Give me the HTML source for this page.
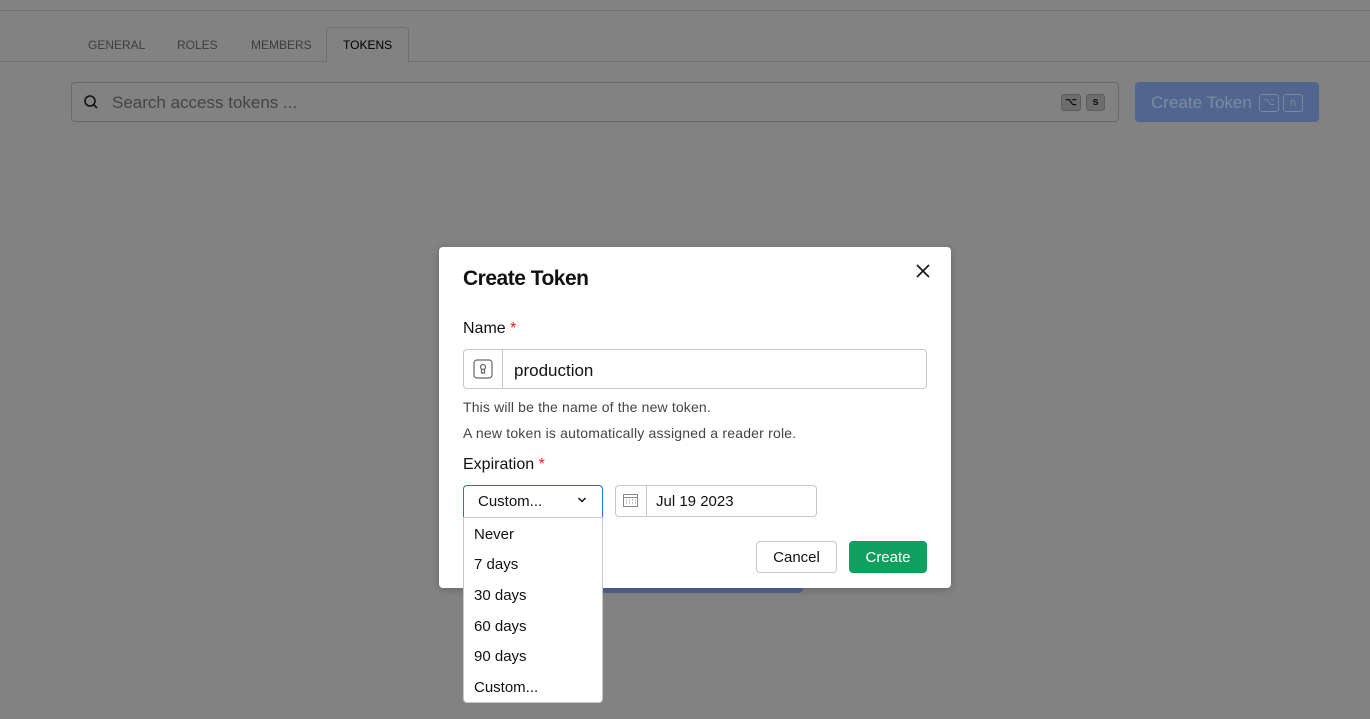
<!DOCTYPE html>
<html><head><style>
*{box-sizing:border-box;margin:0;padding:0}
body{width:1370px;height:719px;background:#828282;font-family:"Liberation Sans",sans-serif;position:relative;overflow:hidden;color:#111}
.abs{position:absolute}
.tab{position:absolute;top:38px;font-size:12px;color:#3d3d3d}
</style></head><body>
<div class="abs" style="left:0;top:10px;width:1370px;height:1px;background:#6f6f6f"></div>
<div class="abs" style="left:0;top:61px;width:1370px;height:1px;background:#6f6f6f"></div>
<div class="tab" style="left:88px">GENERAL</div>
<div class="tab" style="left:177px">ROLES</div>
<div class="tab" style="left:251px">MEMBERS</div>
<div class="abs" style="left:326px;top:27px;width:83px;height:35px;border:1px solid #6f6f6f;border-bottom:none;border-radius:4px 4px 0 0;background:#828282"></div>
<div class="tab" style="left:343px;color:#000">TOKENS</div>
<div class="abs" style="left:71px;top:82px;width:1048px;height:40px;border:1px solid #6a6a6a;border-radius:4px"></div>
<svg class="abs" style="left:83px;top:94px" width="16" height="16" viewBox="0 0 16 16"><circle cx="7" cy="7" r="5" fill="none" stroke="#111" stroke-width="1.6"/><path d="M11 11l3 3" stroke="#111" stroke-width="1.6"/></svg>
<div class="abs" style="left:112px;top:93px;font-size:17px;color:#444">Search access tokens ...</div>
<div class="abs" style="left:1061px;top:94px;width:20px;height:17px;background:#6d6d6d;border:1px solid #5d5d5d;border-radius:3px;font-size:10px;text-align:center;line-height:15px;font-weight:bold">⌥</div>
<div class="abs" style="left:1086px;top:94px;width:19px;height:17px;background:#6d6d6d;border:1px solid #5d5d5d;border-radius:3px;font-size:11px;text-align:center;line-height:15px;font-weight:bold">s</div>
<div class="abs" style="left:1135px;top:82px;width:184px;height:40px;background:#50668e;border-radius:4px"></div>
<div class="abs" style="left:1151px;top:93px;font-size:17px;color:#7d8aa3">Create Token</div>
<div class="abs" style="left:1259px;top:94px;width:20px;height:18px;border:1px solid #7d8aa3;border-radius:3px;font-size:10px;color:#7d8aa3;text-align:center;line-height:16px">⌥</div>
<div class="abs" style="left:1283px;top:94px;width:20px;height:18px;border:1px solid #7d8aa3;border-radius:3px;font-size:11px;color:#7d8aa3;text-align:center;line-height:16px">n</div>
<div class="abs" style="left:600px;top:580px;width:203px;height:13px;background:#50668e;border-radius:4px"></div>

<div class="abs" style="left:439px;top:247px;width:512px;height:341px;background:#fff;border-radius:4px;box-shadow:0 2px 8px rgba(0,0,0,.2)"></div>
<div class="abs" style="left:463px;top:267px;font-size:21px;font-weight:bold;letter-spacing:-.5px">Create Token</div>
<svg class="abs" style="left:916px;top:264px" width="14" height="14" viewBox="0 0 14 14"><path d="M1 1l12 12M13 1L1 13" stroke="#111" stroke-width="1.6"/></svg>
<div class="abs" style="left:463px;top:320px;font-size:16px">Name <span style="color:#e02424">*</span></div>
<div class="abs" style="left:463px;top:349px;width:464px;height:40px;border:1px solid #c8c8c8;border-radius:4px"></div>
<div class="abs" style="left:502px;top:350px;width:1px;height:38px;background:#c8c8c8"></div>
<svg class="abs" style="left:473px;top:359px" width="20" height="20" viewBox="0 0 20 20"><rect x="1" y="1" width="18" height="18" rx="3" fill="none" stroke="#666" stroke-width="1.2"/><circle cx="10" cy="8" r="2.5" fill="none" stroke="#666" stroke-width="1.2"/><path d="M8.5 10v4h3v-4" fill="none" stroke="#666" stroke-width="1.2"/></svg>
<div class="abs" style="left:514px;top:361px;font-size:17px">production</div>
<div class="abs" style="left:463px;top:399px;font-size:14px;color:#444;letter-spacing:.15px">This will be the name of the new token.</div>
<div class="abs" style="left:463px;top:425px;font-size:14px;color:#444;letter-spacing:.2px">A new token is automatically assigned a reader role.</div>
<div class="abs" style="left:463px;top:456px;font-size:16px">Expiration <span style="color:#e02424">*</span></div>
<div class="abs" style="left:463px;top:485px;width:140px;height:32px;border:1.5px solid #1f6fe5;border-bottom:none;border-radius:4px 4px 0 0"></div>
<div class="abs" style="left:478px;top:493px;font-size:15px">Custom...</div>
<svg class="abs" style="left:577px;top:496px" width="10" height="8" viewBox="0 0 10 8"><path d="M1.5 2l3.5 3.5L8.5 2" fill="none" stroke="#111" stroke-width="1.5"/></svg>
<div class="abs" style="left:615px;top:485px;width:202px;height:32px;border:1px solid #c8c8c8;border-radius:4px"></div>
<div class="abs" style="left:646px;top:486px;width:1px;height:30px;background:#c8c8c8"></div>
<svg class="abs" style="left:623px;top:494px" width="15" height="13" viewBox="0 0 15 13"><rect x="0.5" y="0.5" width="14" height="12" fill="none" stroke="#888"/><path d="M0 3.5h15M3 6h1M6 6h1M9 6h1M12 6h1M3 9h1M6 9h1M9 9h1M12 9h1" stroke="#888"/></svg>
<div class="abs" style="left:656px;top:493px;font-size:15px">Jul 19 2023</div>
<div class="abs" style="left:756px;top:541px;width:81px;height:32px;border:1px solid #c8c8c8;border-radius:4px;font-size:15px;text-align:center;line-height:32px">Cancel</div>
<div class="abs" style="left:849px;top:541px;width:78px;height:32px;background:#0fa060;border-radius:4px;font-size:15px;color:#fff;text-align:center;line-height:34px">Create</div>

<div class="abs" style="left:463px;top:517px;width:140px;height:186px;background:#fff;border:1px solid #c8c8c8;border-radius:0 0 4px 4px;font-size:15px">
<div style="position:absolute;left:10px;top:8px">Never</div>
<div style="position:absolute;left:10px;top:38px">7 days</div>
<div style="position:absolute;left:10px;top:69px">30 days</div>
<div style="position:absolute;left:10px;top:100px">60 days</div>
<div style="position:absolute;left:10px;top:130px">90 days</div>
<div style="position:absolute;left:10px;top:161px">Custom...</div>
</div>
</body></html>
